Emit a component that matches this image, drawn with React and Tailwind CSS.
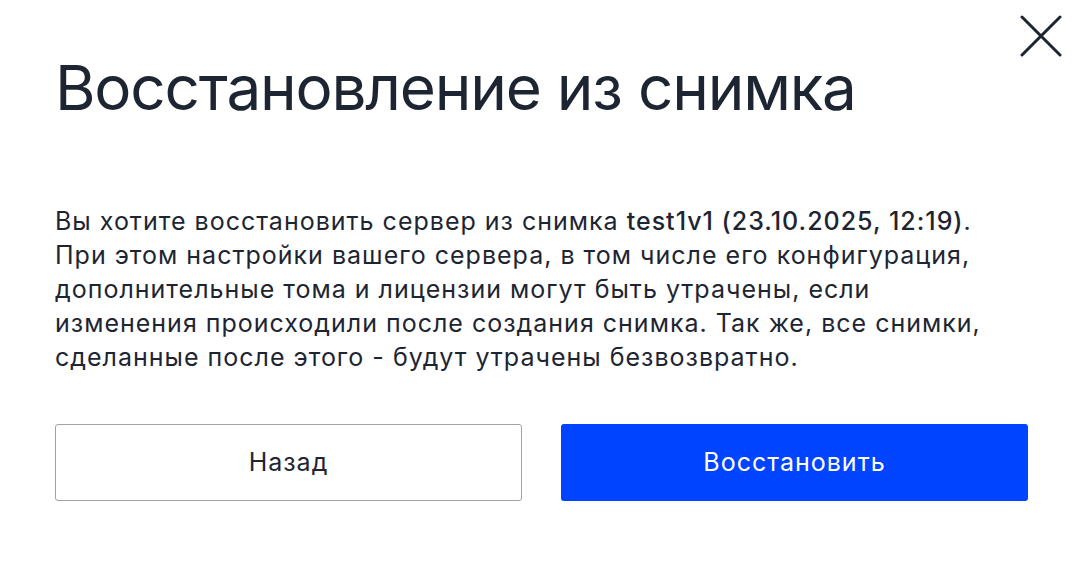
export default function App() {
  return (
    <div className="relative h-[562px] w-[1087px] bg-white text-[#1e2532]">
      {/* close */}
      <button
        type="button"
        aria-label="Закрыть"
        className="absolute right-[19px] top-[9px] flex h-[54px] w-[54px] items-center justify-center text-[#1e2532]"
      >
        <svg width="42" height="42" viewBox="0 0 42 42" fill="none">
          <path d="M2 2L40 40M40 2L2 40" stroke="currentColor" strokeWidth="3" strokeLinecap="round" />
        </svg>
      </button>

      <div className="flex w-[1028px] flex-col pl-[55px] pt-[48px]">
        <h1 className="font-['Inter',sans-serif] text-[62px] font-normal leading-[80px] tracking-[-1.2px]">
          Восстановление из снимка
        </h1>

        <p className="mt-[76px] font-['Inter',sans-serif] text-[25px] leading-[34px] tracking-[1px]">
          Вы хотите восстановить сервер из снимка{" "}
          <span className="font-medium">test1v1 (23.10.2025, 12:19)</span>.
          <br />
          При этом настройки вашего сервера, в том числе его конфигурация,
          <br />
          дополнительные тома и лицензии могут быть утрачены, если
          <br />
          изменения происходили после создания снимка. Так же, все снимки,
          <br />
          сделанные после этого - будут утрачены безвозвратно.
        </p>

        <div className="mt-[50px] grid grid-cols-2 gap-[39px] font-['Inter',sans-serif] text-[25px] tracking-[1px]">
          <button
            type="button"
            className="flex h-[77px] items-center justify-center rounded-[3px] border border-[#a3a3a6] bg-white text-[#1e2532]"
          >
            Назад
          </button>
          <button
            type="button"
            className="flex h-[77px] items-center justify-center rounded-[3px] bg-[#0044ff] text-white"
          >
            Восстановить
          </button>
        </div>
      </div>
    </div>
  );
}
